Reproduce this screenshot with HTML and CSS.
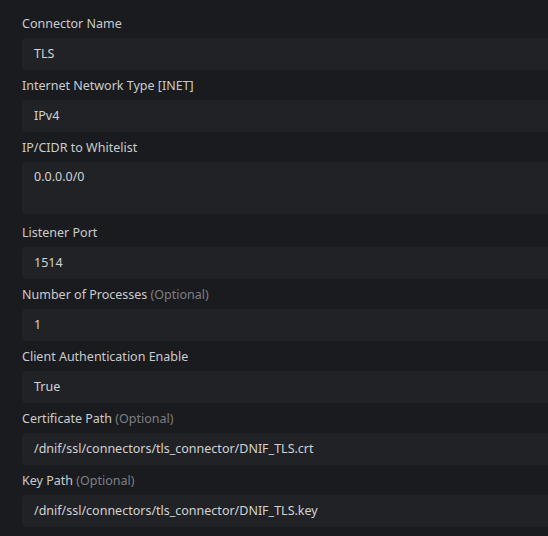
FILE: index.html
```html
<!DOCTYPE html>
<html>
<head>
<meta charset="utf-8">
<link rel="stylesheet" href="styles.css">
</head>
<body>
<form class="form">
  <div class="field">
    <label class="label">Connector Name</label>
    <div class="input">TLS</div>
  </div>
  <div class="field">
    <label class="label">Internet Network Type [INET]</label>
    <div class="input">IPv4</div>
  </div>
  <div class="field field-area">
    <label class="label">IP/CIDR to Whitelist</label>
    <div class="input textarea">0.0.0.0/0</div>
  </div>
  <div class="field">
    <label class="label">Listener Port</label>
    <div class="input">1514</div>
  </div>
  <div class="field">
    <label class="label">Number of Processes <span class="opt">(Optional)</span></label>
    <div class="input">1</div>
  </div>
  <div class="field">
    <label class="label">Client Authentication Enable</label>
    <div class="input">True</div>
  </div>
  <div class="field">
    <label class="label">Certificate Path <span class="opt">(Optional)</span></label>
    <div class="input">/dnif/ssl/connectors/tls_connector/DNIF_TLS.crt</div>
  </div>
  <div class="field">
    <label class="label">Key Path <span class="opt">(Optional)</span></label>
    <div class="input">/dnif/ssl/connectors/tls_connector/DNIF_TLS.key</div>
  </div>
</form>
</body>
</html>
```
FILE: styles.css
```css
html, body {
  margin: 0;
  padding: 0;
  background: #1a1b1e;
  height: 100%;
  overflow: hidden;
}
body {
  font-family: "Noto Sans", "Open Sans", sans-serif;
  font-size: 12.5px;
  color: #c1c2c5;
}
.form {
  display: flex;
  flex-direction: column;
  gap: 5px;
  padding: 13px 0 0 22px;
  margin-right: -20px;
}
.field {
  display: flex;
  flex-direction: column;
  gap: 5px;
}
.field-area {
  margin-bottom: 3px;
}
.label {
  display: block;
  line-height: 22px;
  height: 20px;
  color: #cbccce;
}
.opt {
  color: #7d7f84;
}
.input {
  background: #212226;
  border-radius: 4px;
  height: 32px;
  line-height: 32px;
  padding: 0 12px;
  color: #d2d3d5;
  box-sizing: border-box;
}
.textarea {
  height: 52px;
  line-height: 20px;
  padding-top: 5px;
}
```
